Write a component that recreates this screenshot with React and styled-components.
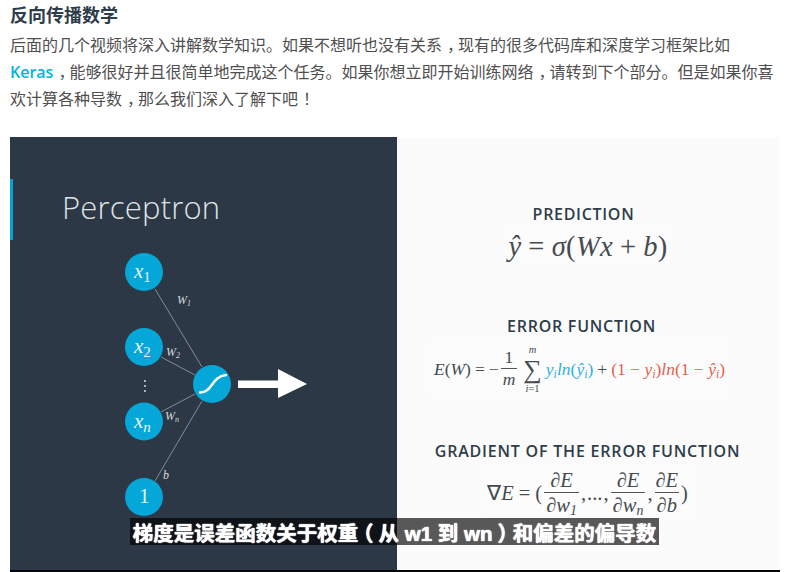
import React from "react";
import styled, { createGlobalStyle } from "styled-components";

const Global = createGlobalStyle`
  html, body { margin: 0; padding: 0; background: #fff; }
  body { font-family: "Noto Sans CJK SC", sans-serif; overflow: hidden; }
`;
const Page = styled.div`
  width: 800px; height: 572px; box-sizing: border-box; padding: 4px 20px 0 10px; overflow: hidden;
`;
const Heading = styled.h2`
  margin: 0; font-size: 18px; line-height: 20px; font-weight: 700; color: #2e3d49;
  font-family: "Noto Sans CJK SC", sans-serif;
`;
const Lesson = styled.p`
  margin: 7px 0 0; font-size: 16px; line-height: 27px; color: #4f4f4f; width: 770px;
  font-family: "Noto Sans CJK SC", sans-serif;
`;
const Line = styled.span`display: block; height: 27px; white-space: nowrap;`;
const Mark = styled.span`font-feature-settings: "halt"; padding: 0 3px 0 5px; line-height: 1;`;
const Link = styled.a`color: #02b3e4; font-weight: 600; font-family: "Open Sans", sans-serif; line-height: 1;`;
const Video = styled.div`
  position: relative; display: flex; width: 770px; height: 435px; margin-top: 25px;
  box-sizing: border-box; border-bottom: 2px solid #050505;
`;
const Left = styled.div`width: 387px; background: #2c3845; display: flex; flex-direction: column; padding-top: 42px; box-sizing: border-box;`;
const TitleRow = styled.div`display: flex; align-items: center; height: 61px;`;
const Accent = styled.div`width: 3px; height: 61px; background: #02a3d4;`;
const SlideTitle = styled.div`
  margin-left: 49px; padding-bottom: 6px; font-size: 31px; font-weight: 300; color: #dfe3e6;
  font-family: "Open Sans", sans-serif; letter-spacing: 0.2px;
`;
const Diagram = styled.svg`display: block; margin-left: 90px; width: 240px; height: 290px;`;
const Right = styled.div`
  flex: 1; background: #fbfbfb; display: flex; flex-direction: column; align-items: center; padding-top: 67px;
`;
const Section = styled.section`
  display: flex; flex-direction: column; align-items: center; margin-top: ${p => p.$top}px; transform: translateX(${p => p.$shift}px);
`;
const SectionTitle = styled.div`
  font-family: "Open Sans", sans-serif; font-weight: 600; font-size: 16px; line-height: 20px; letter-spacing: ${p => p.$spacing}px;
  color: #2e3d49; white-space: nowrap;
`;
const Formula = styled.div`
  display: flex; align-items: center; justify-content: center; white-space: nowrap; height: ${p => p.$h}px; margin-top: ${p => p.$gap}px;
  margin-left: ${p => p.$offset || 0}px; letter-spacing: ${p => p.$track || 0}px;
  font-family: "Liberation Serif", serif; font-size: ${p => p.$size}px; color: #454b50; background: #fcfcfc; padding: 0 4px;
`;
const I = styled.i`color: ${p => p.$tone || "inherit"};`;
const Tone = styled.span`color: ${p => p.$tone}; margin: 0 ${p => p.$m || 0}px;`;
const Sub = styled.sub`font-size: 0.68em; line-height: 0; vertical-align: -0.25em;`;
const Op = styled.span`margin: 0 ${p => p.$m}px;`;
const Frac = styled.span`display: inline-flex; flex-direction: column; align-items: center; margin: 0 2px; vertical-align: middle; line-height: 1.12;`;
const Den = styled.span`border-top: 1px solid #555; align-self: stretch; text-align: center; padding: 1px 2px 0;`;
const Sum = styled.span`display: inline-flex; flex-direction: column; align-items: center; margin: 0 4px; line-height: 1;`;
const SumMark = styled.span`font-size: 26px; line-height: 29px;`;
const Limit = styled.span`font-size: 10.5px; line-height: 10px;`;
const Caption = styled.div`
  position: absolute; left: 120px; top: 381px; height: 27px; width: 529px; display: flex; align-items: center; justify-content: center;
  background: rgba(0,0,0,0.65); color: #fff; font-weight: 700; font-size: 20.5px; white-space: pre; text-shadow: 0 0 1px #fff, 0 0 1px #fff;
  font-family: "Liberation Sans", "Noto Sans CJK SC", sans-serif;
`;
const Paren = styled.span`font-feature-settings: "halt"; padding: 0 5px;`;
const Node = ({ cx, cy, main, sub }) => (
  <g>
    <circle cx={cx} cy={cy} r="19" fill="#05a6d8" />
    <text x={cx - (sub ? 10 : 5)} y={cy + 6} fontFamily="Liberation Serif" fontStyle={sub ? "italic" : "normal"} fontSize="21" fill="#e6f5fa">
      {main}
      {sub && <tspan dy="4" fontSize="15" fontStyle={sub === "n" ? "italic" : "normal"}>{sub}</tspan>}
    </text>
  </g>
);
const Weight = ({ x, y, main, sub }) => (
  <text x={x} y={y} fontFamily="Liberation Serif" fontStyle="italic" fontSize="12" fill="#d5dade">
    {main}
    {sub && <tspan dy="2" fontSize="8">{sub}</tspan>}
  </text>
);
const Partial = ({ children }) => (
  <Frac><span><I>∂E</I></span><Den><I>∂{children}</I></Den></Frac>
);
export default function App() {
  return (
    <Page>
      <Global />
      <Heading>反向传播数学</Heading>
      <Lesson>
        <Line>后面的几个视频将深入讲解数学知识。如果不想听也没有关系<Mark>，</Mark>现有的很多代码库和深度学习框架比如</Line>
        <Line><Link>Keras</Link><Mark>，</Mark>能够很好并且很简单地完成这个任务。如果你想立即开始训练网络<Mark>，</Mark>请转到下个部分。但是如果你喜</Line>
        <Line>欢计算各种导数<Mark>，</Mark>那么我们深入了解下吧<Mark>！</Mark></Line>
      </Lesson>
      <Video>
        <Left>
          <TitleRow>
            <Accent />
            <SlideTitle>Perceptron</SlideTitle>
          </TitleRow>
          <Diagram viewBox="100 240 240 290">
            <g stroke="#838c94" strokeWidth="1">
              <line x1="155" y1="289" x2="202" y2="367" />
              <line x1="161" y1="357" x2="195" y2="375" />
              <line x1="161" y1="412" x2="195" y2="394" />
              <line x1="155" y1="481" x2="202" y2="401" />
            </g>
            <Node cx={144} cy={272} main="x" sub="1" />
            <Node cx={144} cy={347} main="x" sub="2" />
            <Node cx={144} cy={421.5} main="x" sub="n" />
            <Node cx={144} cy={497} main="1" />
            <circle cx="212" cy="384" r="19" fill="#05a6d8" />
            <path d="M200 392.5C213 392.5 211 376.5 226 375" fill="none" stroke="#fff" strokeWidth="2.5" strokeLinecap="round" />
            <Weight x={177} y={304} main="W" sub="1" />
            <Weight x={166} y={356} main="W" sub="2" />
            <Weight x={165} y={420} main="W" sub="n" />
            <Weight x={163} y={479} main="b" />
            <g fill="#d8dde0">
              <circle cx="145" cy="381" r="1" />
              <circle cx="145" cy="386" r="1" />
              <circle cx="145" cy="391" r="1" />
            </g>
            <path d="M238 380.5H278V369L307 384L278 398V388H238Z" fill="#fff" />
          </Diagram>
        </Left>
        <Right>
          <Section $top={0} $shift={-5}>
            <SectionTitle $spacing={0.7}>PREDICTION</SectionTitle>
            <Formula $h={34} $gap={6} $size={28.5} $offset={9} $track={0.3}>
              <I>ŷ</I><Op $m={7}>=</Op><I>σ</I>(<I>Wx</I><Op $m={7}>+</Op><I>b</I>)
            </Formula>
          </Section>
          <Section $top={52} $shift={-7}>
            <SectionTitle $spacing={0.75}>ERROR FUNCTION</SectionTitle>
            <Formula $h={54} $gap={6} $size={17.5} $offset={-4}>
              <I>E</I>(<I>W</I>)<Op $m={4}>=</Op>−
              <Frac><span>1</span><Den><I>m</I></Den></Frac>
              <Sum><Limit><I>m</I></Limit><SumMark>∑</SumMark><Limit><I>i</I>=1</Limit></Sum>
              <Tone $tone="#2fb2dd"><I>y<Sub>i</Sub>ln</I>(<I>ŷ<Sub>i</Sub></I>)</Tone>
              <Op $m={4}>+</Op>
              <Tone $tone="#e0634f">(1 − <I>y<Sub>i</Sub></I>)<I>ln</I>(1 − <I>ŷ<Sub>i</Sub></I>)</Tone>
            </Formula>
          </Section>
          <Section $top={45} $shift={-1}>
            <SectionTitle $spacing={0.8}>GRADIENT OF THE ERROR FUNCTION</SectionTitle>
            <Formula $h={50} $gap={7} $size={20.5}>
              ∇<I>E</I><Op $m={5}>=</Op>(
              <Partial>w<Sub>1</Sub></Partial>,<Op $m={1}>...</Op>,
              <Partial>w<Sub>n</Sub></Partial>,
              <Partial>b</Partial>)
            </Formula>
          </Section>
        </Right>
        <Caption>梯度是误差函数关于权重<Paren>（</Paren>从 w1 到 wn<Paren>）</Paren>和偏差的偏导数</Caption>
      </Video>
    </Page>
  );
}
